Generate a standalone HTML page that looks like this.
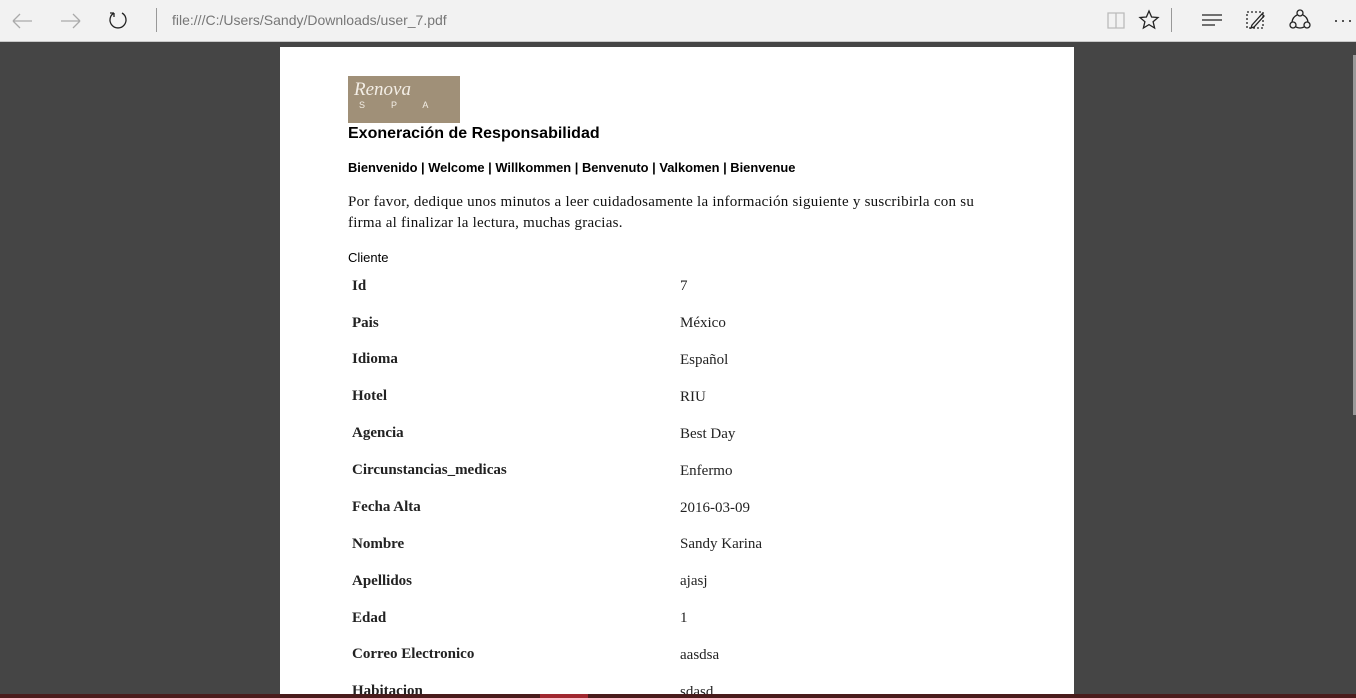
<!DOCTYPE html>
<html><head><meta charset="utf-8"><style>
*{margin:0;padding:0;box-sizing:border-box}
body{width:1356px;height:698px;overflow:hidden;background:#454545;position:relative;font-family:"Liberation Sans",sans-serif}
#bar{position:absolute;left:0;top:0;width:1356px;height:42px;background:#f2f2f2;border-bottom:1px solid #c8c8c8}
#url{position:absolute;left:172px;top:12px;font-size:14px;color:#777}
.sep{position:absolute;top:8px;width:1px;height:24px;background:#999}
#page{position:absolute;left:280px;top:47px;width:794px;height:647px;background:#fff;overflow:hidden}
#logo{position:absolute;left:68px;top:29px;width:112px;height:47px;background:#a09078;color:#f3eee6}
h1{position:absolute;left:68px;top:78px;font-size:16px;font-weight:bold;color:#000}
.b{position:absolute;left:68px;top:113px;font-size:12.9px;font-weight:bold}
.p{position:absolute;left:68px;top:145px;width:648px;font-family:"Liberation Serif",serif;font-size:15px;letter-spacing:0.25px;line-height:21px;color:#111}
.c{position:absolute;left:68px;top:203px;font-size:13px}
.r{position:absolute;font-family:"Liberation Serif",serif;font-size:15px;color:#222}
.k{left:72px;font-weight:bold}.v{left:400px}
#foot{position:absolute;left:0;top:694px;width:1356px;height:4px;background:#4a1c1c}
</style></head><body>
<div id="bar">
<svg width="1356" height="42" style="position:absolute;left:0;top:0" fill="none" stroke-width="1.3">
<path d="M13 21H32M13 21l7-7M13 21l7 7" stroke="#aaa"/>
<path d="M61 21H80M80 21l-7-7M80 21l-7 7" stroke="#aaa"/>
<path d="M114 13A8 8 0 1 0 122 13M114 13v4M114 13h-4" stroke="#222"/>
<path d="M1108 13h8v15h-8zM1116 13h8v15h-8z" stroke="#bbb"/>
<path d="M1149 11l2.6 6 6.4.5-4.9 4.2 1.5 6.3-5.6-3.4-5.6 3.4 1.5-6.3-4.9-4.2 6.4-.5z" stroke="#222"/>
<path d="M1202 15h20M1202 20h20M1202 25h13" stroke="#222"/>
<path d="M1247 12h16v16h-16z" stroke="#222" stroke-dasharray="2 2"/>
<path d="M1252 25l10-11 2 2-10 11-3 1z" stroke="#222"/>
<circle cx="1300" cy="13" r="3" stroke="#222"/><circle cx="1293" cy="25" r="3" stroke="#222"/><circle cx="1307" cy="25" r="3" stroke="#222"/>
<path d="M1297 15a9 9 0 0 0-5 7M1303 15a9 9 0 0 1 5 7M1296 27a9 9 0 0 0 8 0" stroke="#222"/>
<g fill="#222" stroke="none"><circle cx="1336" cy="21" r="1"/><circle cx="1343" cy="21" r="1"/><circle cx="1350" cy="21" r="1"/></g>
</svg>
<div class="sep" style="left:156px"></div>
<div class="sep" style="left:1171px"></div>
<div id="url">file:///C:/Users/Sandy/Downloads/user_7.pdf</div>
</div>
<div style="position:absolute;left:1353px;top:55px;width:3px;height:360px;background:#999"></div>
<div id="page">
<div id="logo"><div style="position:absolute;left:6px;top:3px;font-family:'Liberation Serif',serif;font-style:italic;font-size:19px">Renova</div><div style="position:absolute;left:11px;top:24px;font-size:9px;letter-spacing:26px">SPA</div></div>
<h1>Exoneración de Responsabilidad</h1>
<div class="b">Bienvenido | Welcome | Willkommen | Benvenuto | Valkomen | Bienvenue</div>
<div class="p">Por favor, dedique unos minutos a leer cuidadosamente la información siguiente y suscribirla con su<br>firma al finalizar la lectura, muchas gracias.</div>
<div class="c">Cliente</div>
<div class="r k" style="top:231px">Id</div><div class="r v" style="top:231px">7</div>
<div class="r k" style="top:268px">Pais</div><div class="r v" style="top:268px">México</div>
<div class="r k" style="top:304px">Idioma</div><div class="r v" style="top:305px">Español</div>
<div class="r k" style="top:341px">Hotel</div><div class="r v" style="top:342px">RIU</div>
<div class="r k" style="top:378px">Agencia</div><div class="r v" style="top:379px">Best Day</div>
<div class="r k" style="top:415px">Circunstancias_medicas</div><div class="r v" style="top:416px">Enfermo</div>
<div class="r k" style="top:452px">Fecha Alta</div><div class="r v" style="top:453px">2016-03-09</div>
<div class="r k" style="top:489px">Nombre</div><div class="r v" style="top:489px">Sandy Karina</div>
<div class="r k" style="top:526px">Apellidos</div><div class="r v" style="top:526px">ajasj</div>
<div class="r k" style="top:563px">Edad</div><div class="r v" style="top:563px">1</div>
<div class="r k" style="top:599px">Correo Electronico</div><div class="r v" style="top:600px">aasdsa</div>
<div class="r k" style="top:636px">Habitacion</div><div class="r v" style="top:637px">sdasd</div>
</div>
<div id="foot"><div style="position:absolute;left:540px;width:48px;height:4px;background:#a02830"></div></div>
</body></html>
